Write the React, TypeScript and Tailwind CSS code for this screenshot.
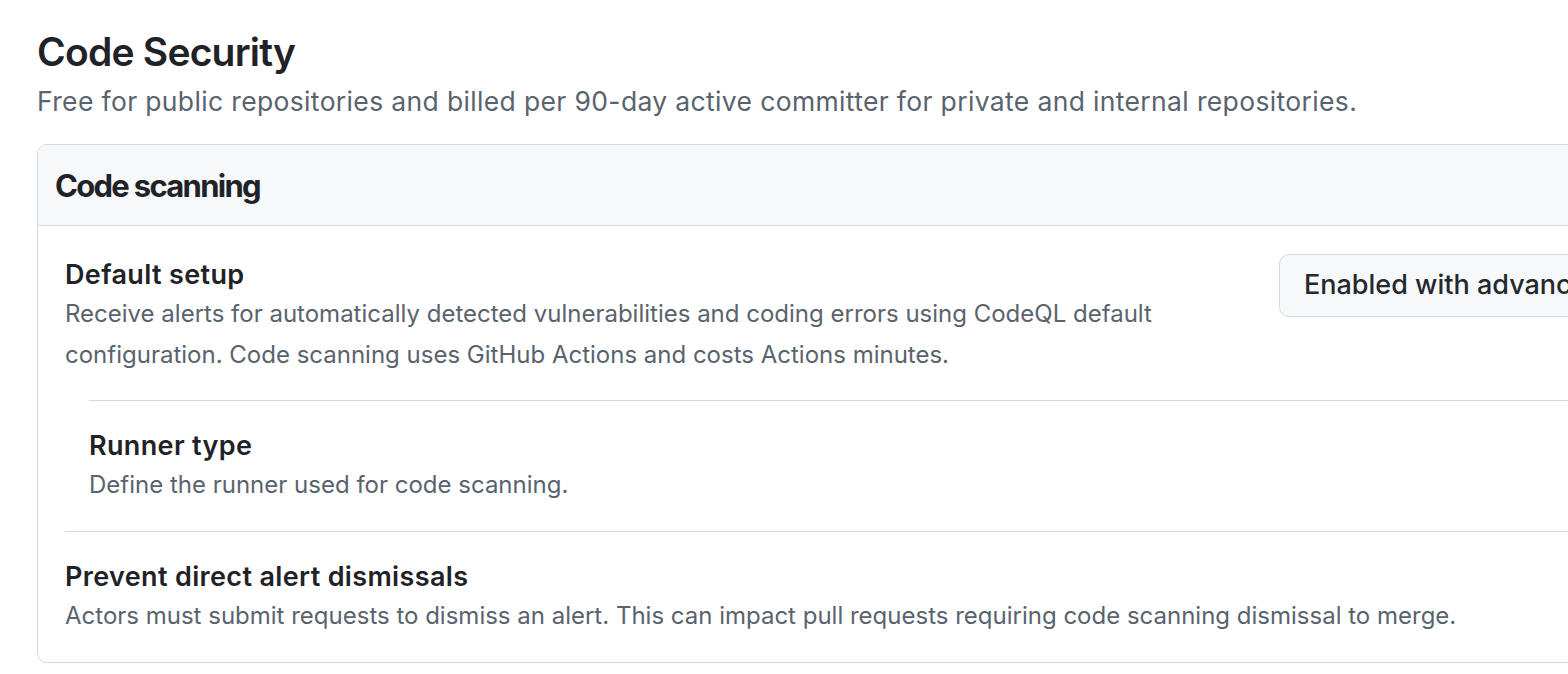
import React from "react";

export default function App() {
  return (
    <div
      className="w-[1568px] h-[674px] overflow-hidden bg-white text-[#1f2328]"
      style={{ fontFamily: "Inter, 'Noto Sans', sans-serif" }}
    >
      <div className="w-[1800px] pl-[37px] pt-[27px]">
        <h2 className="text-[39px] leading-[50px] font-semibold tracking-[-0.02em]">Code Security</h2>
        <p className="mt-[4px] text-[26.5px] leading-[40px] tracking-[0.35px] text-[#59636e]">
          Free for public repositories and billed per 90-day active committer for private and internal repositories.
        </p>
        <div className="mt-[23px] border border-[#d1d9e0] rounded-[10px] overflow-hidden">
          <div className="h-[81px] flex items-center pl-[17px] bg-[#f6f8fa] border-b border-[#d1d9e0]">
            <h3 className="mt-[2px] text-[31px] leading-[40px] font-bold tracking-[-0.055em]">Code scanning</h3>
          </div>
          <div className="px-[27px]">
            <div className="flex items-start pt-[30px] pb-[25px]">
              <div className="w-[1190px] shrink-0">
                <div className="text-[27px] leading-[38px] font-semibold tracking-[0.35px]">Default setup</div>
                <p className="text-[24px] leading-[40.5px] text-[#59636e]">
                  Receive alerts for automatically detected vulnerabilities and coding errors using CodeQL default configuration. Code scanning uses GitHub Actions and costs Actions minutes.
                </p>
              </div>
              <button className="ml-[24px] mt-[-2px] h-[63px] shrink-0 flex items-center gap-3 px-[24px] rounded-[10px] border border-[#d1d9e0] bg-[#f6f8fa] text-[#25292e] text-[27px] font-medium whitespace-nowrap">
                Enabled with advanced setup
              </button>
            </div>
            <div className="ml-[24px] border-t border-[#d1d9e0] pt-[26px] pb-[25px]">
              <div className="text-[27px] leading-[38px] font-semibold tracking-[0.35px]">Runner type</div>
              <p className="text-[24px] leading-[40.5px] text-[#59636e]">Define the runner used for code scanning.</p>
            </div>
            <div className="border-t border-[#d1d9e0] pt-[26px] pb-[26px]">
              <div className="text-[27px] leading-[38px] font-semibold tracking-[0.35px]">Prevent direct alert dismissals</div>
              <p className="text-[24px] leading-[40.5px] text-[#59636e]">
                Actors must submit requests to dismiss an alert. This can impact pull requests requiring code scanning dismissal to merge.
              </p>
            </div>
          </div>
        </div>
      </div>
    </div>
  );
}
